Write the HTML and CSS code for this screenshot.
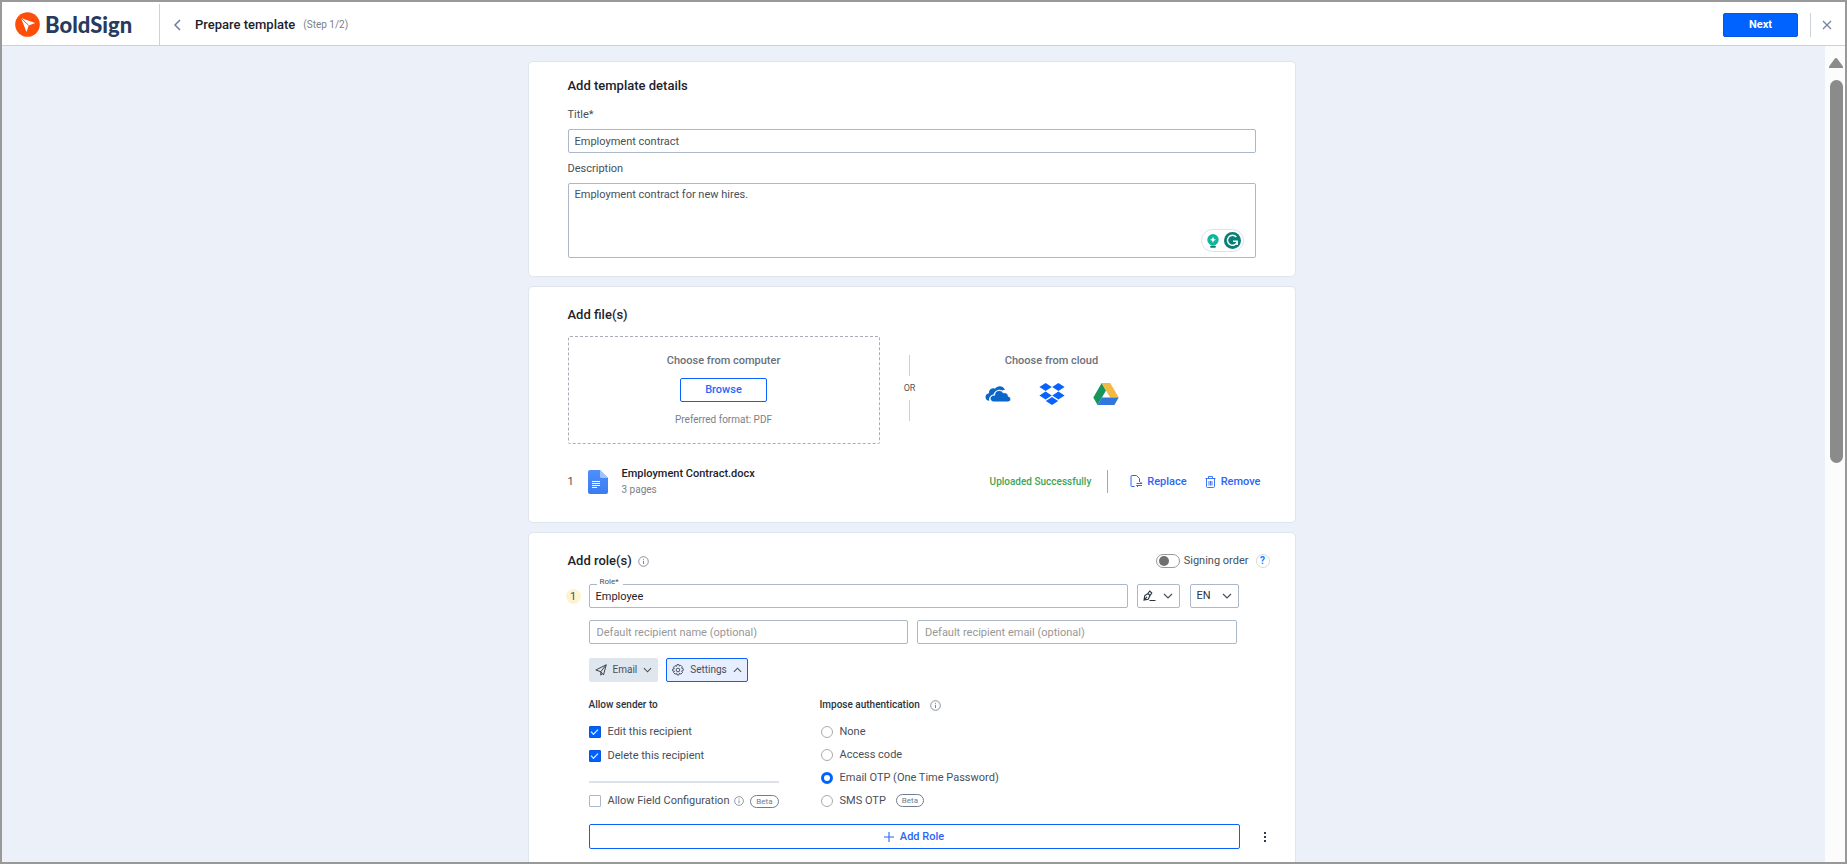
FILE: index.html
```html
<!DOCTYPE html>
<html lang="en">
<head>
<meta charset="utf-8">
<title>Prepare template</title>
<link rel="stylesheet" href="styles.css">
</head>
<body>
<svg class="defs" aria-hidden="true">
  <symbol id="info" viewBox="0 0 11 11"><circle cx="5.500" cy="5.500" r="4.800" fill="none" stroke="currentColor" stroke-width=".9"/><path d="M5.500 4.800v3.200M5.500 2.800v1" stroke="currentColor" stroke-width="1"/></symbol>
  <symbol id="down" viewBox="0 0 10 6"><path d="M1 1l4 4 4-4" fill="none" stroke="currentColor" stroke-width="1.200"/></symbol>
  <symbol id="up" viewBox="0 0 10 6"><path d="M1 5l4-4 4 4" fill="none" stroke="currentColor" stroke-width="1.200"/></symbol>
</svg>
<div class="app">
  <header class="topbar">
    <div class="brand">
      <svg width="25" height="25" viewBox="0 0 25 25"><circle cx="12.500" cy="12.500" r="12.300" fill="#ff4d0a"/><path d="M6 6l14.200 5-6.500 2.400-2.200 6.700z" fill="#fff"/><path d="M6 6l7.700 7.400" stroke="#ff4d0a" stroke-width="1"/></svg>
      <span class="brand-name">BoldSign</span>
    </div>
    <button class="icon-btn back" aria-label="Back"><svg width="8" height="12" viewBox="0 0 8 12"><path d="M7 1L2 6l5 5" fill="none" stroke="#6b7da0" stroke-width="1.500"/></svg></button>
    <h1 class="page-title">Prepare template</h1>
    <span class="step">(Step 1/2)</span>
    <button class="next">Next</button>
    <span class="top-sep"></span>
    <button class="icon-btn close" aria-label="Close"><svg width="10" height="10" viewBox="0 0 10 10"><path d="M1 1l8 8M9 1L1 9" stroke="#75849c" stroke-width="1.300"/></svg></button>
  </header>
  <div class="body">
    <main class="content">
      <section class="card details">
        <h2>Add template details</h2>
        <label class="field-label" for="title">Title*</label>
        <input class="box" id="title" type="text" value="Employment contract">
        <label class="field-label" for="desc">Description</label>
        <div class="area-wrap">
          <textarea class="box area" id="desc">Employment contract for new hires.</textarea>
          <div class="assist">
            <svg width="12" height="14" viewBox="0 0 12 14"><circle cx="6" cy="5.800" r="5.700" fill="#10b59b"/><path d="M3.200 10h5.600l-1 1.500H4.200z" fill="#10b59b"/><path d="M6 2.500c.4 2.200 1 2.800 3.200 3.300C7 6.300 6.400 7 6 9.200 5.600 7 5 6.300 2.800 5.800 5 5.300 5.600 4.700 6 2.500z" fill="#fff"/><path d="M3.200 12h5.600v1q0 .8-.8.800H4q-.8 0-.8-.8z" fill="#087f75"/></svg>
            <svg width="17" height="17" viewBox="0 0 17 17"><circle cx="8.500" cy="8.500" r="8.500" fill="#067f75"/><path d="M12.300 5.100a5 5 0 1 0 .9 4.900M9 9.300h4.200v3.600" fill="none" stroke="#fff" stroke-width="1.500"/></svg>
          </div>
        </div>
      </section>

      <section class="card files">
        <h2>Add file(s)</h2>
        <div class="sources">
          <div class="drop">
            <span class="source-title">Choose from computer</span>
            <button class="browse">Browse</button>
            <span class="hint">Preferred format: PDF</span>
          </div>
          <div class="or"><span class="or-line"></span>OR<span class="or-line"></span></div>
          <div class="cloud">
            <span class="source-title">Choose from cloud</span>
            <div class="cloud-icons">
              <button class="icon-btn" aria-label="OneDrive"><svg width="26" height="22" viewBox="0 0 26 22"><path d="M4.300 17.800C2 17.600.5 16.200.5 14c0-2 1.400-3.500 3.400-3.800-.1-2.800 1.600-4.700 4-4.900.8 0 1.500.1 2.100.4 1.100-1.600 2.700-2.500 4.700-2.500 2.500 0 4.500 1.400 5.300 3.900-1-.1-1.800 0-2.600.4-1.500-.8-3.300-1-5-.3C10.300 8 9 9.500 8.600 11.400 6 11.800 4 14 4.100 16.600z" fill="#0a66c8"/><path d="M8.800 18.900C6.600 18.800 5.200 17.500 5.200 15.600c0-2 1.500-3.400 3.700-3.400h.7c0-2.800 2-4.700 4.500-4.700 2 0 3.400.9 4.200 2.400 2.600-.8 5 .8 5 3.500 1.500.2 2.500 1.200 2.500 2.700 0 1.600-1.200 2.800-2.900 2.800z" fill="#0a66c8" stroke="#fff" stroke-width=".8"/></svg></button>
              <button class="icon-btn" aria-label="Dropbox"><svg width="26" height="22" viewBox="0 0 26 22"><path d="M6.600 0l6.200 4-6.200 4-6.200-4zM19.400 0l6.200 4-6.200 4-6.200-4zM6.600 8.400l6.200 4-6.200 4-6.200-4zM19.400 8.400l6.200 4-6.200 4-6.200-4zM13 14l6.200 4L13 22l-6.200-4z" fill="#0a62fe"/></svg></button>
              <button class="icon-btn" aria-label="Google Drive"><svg width="26" height="22" viewBox="0 0 26 22"><path d="M8.700 0L.3 14.600 4.600 22 13 7.400z" fill="#14965d"/><path d="M8.700 0h8.500l8.500 14.600h-8.600z" fill="#f4b942"/><path d="M4.600 22l4.300-7.400h16.800L21.400 22z" fill="#3076de"/></svg></button>
            </div>
          </div>
        </div>
        <div class="file-row">
          <span class="file-no">1</span>
          <svg width="20" height="24" viewBox="0 0 20 24"><defs><linearGradient id="doc" x1="0" y1="0" x2="0" y2="1"><stop offset="0" stop-color="#4e8ffb"/><stop offset="1" stop-color="#3a7bf0"/></linearGradient></defs><path d="M2 0h10l8 8v14q0 2-2 2H2q-2 0-2-2V2Q0 0 2 0z" fill="url(#doc)"/><path d="M12 0l8 8h-6.500Q12 8 12 6.500z" fill="#a3c4fb"/><path d="M4 11.500h8M4 13.500h8M4 15.500h8M4 17.500h5" stroke="#fff" stroke-width="1.200"/></svg>
          <div class="file-text"><span class="file-name">Employment Contract.docx</span><span class="file-pages">3 pages</span></div>
          <span class="status">Uploaded Successfully</span>
          <span class="file-sep"></span>
          <button class="link-btn"><svg width="13" height="13" viewBox="0 0 13 13"><path d="M4.500 11.500H2q-1 0-1-1v-9q0-1 1-1h4.500l3 3v3.500M6.500 8.500H12l-1.500-1.500M12 10.500H6.500L8 12" fill="none" stroke="#2b66f6" stroke-width="1"/></svg>Replace</button>
          <button class="link-btn remove"><svg width="11" height="12" viewBox="0 0 11 12"><path d="M.5 2.500h10M3.500 2.500v-2h4v2M1.500 2.500v8q0 1 1 1h6q1 0 1-1v-8M4 5v4.500M5.500 5v4.500M7 5v4.500" fill="none" stroke="#2b66f6" stroke-width=".9"/></svg>Remove</button>
        </div>
      </section>

      <section class="card roles">
        <div class="roles-head">
          <h2>Add role(s)</h2>
          <svg class="info" width="11" height="11"><use href="#info"/></svg>
          <label class="order"><input class="toggle" type="checkbox" role="switch">Signing order</label>
          <button class="help" aria-label="Help">?</button>
        </div>
        <div class="role-row">
          <span class="badge-no">1</span>
          <div class="role-field">
            <label class="float-label" for="role">Role*</label>
            <input class="box role-input" id="role" type="text" value="Employee">
          </div>
          <button class="sign-btn" aria-label="Signer type"><svg width="13" height="12" viewBox="0 0 13 12"><path d="M1 10l.8-4.500L5 3.500l2 2-1.800 3.700zM1 10l3-3.200M5 3.300L6.800 1l2 2-1.700 2.300M6.500 10.500h6" fill="none" stroke="#2c3440" stroke-width="1.100"/></svg><svg width="10" height="6"><use href="#down"/></svg></button>
          <div class="lang"><select aria-label="Language"><option>EN</option></select><svg width="10" height="6"><use href="#down"/></svg></div>
        </div>
        <div class="role-body">
          <div class="recipients">
            <input class="box" type="text" aria-label="Default recipient name" placeholder="Default recipient name (optional)">
            <input class="box" type="text" aria-label="Default recipient email" placeholder="Default recipient email (optional)">
          </div>
          <div class="chips">
            <button class="chip"><svg width="12" height="12" viewBox="0 0 12 12"><path d="M.8 6L11.200.8 8.500 11 5.800 7.700zM11.200.8L5.800 7.700v3.500l1.400-1.800" fill="none" stroke="#3d4652" stroke-width="1" stroke-linejoin="round"/></svg>Email<svg width="9" height="6"><use href="#down"/></svg></button>
            <button class="chip on"><svg width="12" height="12" viewBox="0 0 12 12"><path d="M5 .6h2l.4 1.500 1.400-.8 1.500 1.500-.8 1.300 1.700.5v2l-1.600.5.9 1.500-1.600 1.500-1.500-.9-.4 1.700H5l-.4-1.600-1.500.9-1.500-1.600.9-1.400L.7 7V5l1.700-.4-.9-1.500L3 1.600l1.500.8z" fill="none" stroke="#3d4652" stroke-width=".9"/><circle cx="6" cy="6" r="1.800" fill="none" stroke="#3d4652" stroke-width=".9"/></svg>Settings<svg width="9" height="6"><use href="#up"/></svg></button>
          </div>
          <div class="settings">
            <div class="allow">
              <h3>Allow sender to</h3>
              <label class="opt"><input class="check" type="checkbox" checked>Edit this recipient</label>
              <label class="opt"><input class="check" type="checkbox" checked>Delete this recipient</label>
              <hr>
              <div class="config"><label class="opt"><input class="check" type="checkbox">Allow Field Configuration</label><svg class="info" width="10" height="10" viewBox="0 0 11 11"><use href="#info" width="11" height="11"/></svg><span class="beta">Beta</span></div>
            </div>
            <div class="auth">
              <h3>Impose authentication<svg class="info" width="11" height="11"><use href="#info"/></svg></h3>
              <label class="opt"><input class="radio" type="radio" name="auth">None</label>
              <label class="opt"><input class="radio" type="radio" name="auth">Access code</label>
              <label class="opt"><input class="radio" type="radio" name="auth" checked>Email OTP (One Time Password)</label>
              <label class="opt"><input class="radio" type="radio" name="auth">SMS OTP<span class="beta">Beta</span></label>
            </div>
          </div>
        </div>
        <div class="add-row">
          <button class="add"><svg width="10" height="10" viewBox="0 0 10 10"><path d="M5 0v10M0 5h10" stroke="#2b66f6" stroke-width="1.100"/></svg>Add Role</button>
          <button class="icon-btn" aria-label="More"><svg width="4" height="12" viewBox="0 0 4 12"><path d="M1 1h2v2H1zM1 5h2v2H1zM1 9h2v2H1z" fill="#2f3a4d"/></svg></button>
        </div>
      </section>
    </main>
    <div class="scroll" aria-hidden="true">
      <svg width="14" height="10" viewBox="0 0 14 10"><path d="M5.500 1q1.500-1.800 3 0L14 8.500V10H0V8.500z" fill="#8b8b8b"/></svg>
      <div class="track"><div class="thumb"></div></div>
    </div>
  </div>
</div>
</body>
</html>
```
FILE: styles.css
```css
* { box-sizing: border-box; }
body { margin: 0; font-family: Roboto, "Liberation Sans", sans-serif; font-size: 11px; line-height: 16px; color: #474f5a; }
button, input, textarea, select { font: inherit; color: inherit; margin: 0; }
button { cursor: pointer; padding: 0; background: none; border: 0; }
svg { display: block; flex: none; }
h1, h2, h3 { margin: 0; font-weight: 500; }
.defs { display: none; }
.app { height: 100vh; border: 2px solid #999; overflow: hidden; display: flex; flex-direction: column; }

.topbar { flex: none; height: 44px; display: flex; align-items: center; background: #fff; border-bottom: 1px solid #c8d2e0; padding: 2px 13px 0 0; }
.brand { align-self: stretch; width: 158px; display: flex; align-items: center; gap: 5px; padding-left: 13px; border-right: 1px solid #c8d2e0; }
.brand-name { font-family: Lato, sans-serif; font-weight: 900; font-size: 22px; line-height: 24px; color: #283a5e; }
.icon-btn { display: flex; align-items: center; justify-content: center; }
.back { margin-left: 13px; }
.page-title { margin-left: 14px; font-size: 13px; color: #1d232c; }
.step { margin-left: 8px; font-size: 10px; color: #7a7f87; }
.next { margin-left: auto; width: 75px; height: 24px; border: 1px solid #0a55d8; border-radius: 2px; background: #0062ff; color: #fff; font-weight: 700; }
.top-sep { width: 1px; height: 24px; margin: 0 11px 0 12px; background: #ccd0d8; }

.body { flex: 1; min-height: 0; display: flex; background: #ecf0f9; }
.content { flex: 1; min-width: 0; overflow: hidden; padding: 15px 20px 15px 16px; display: flex; flex-direction: column; align-items: center; gap: 9px; }
.scroll { width: 20px; background: #fcfcfc; display: flex; flex-direction: column; align-items: center; padding: 12px 2px 0 4px; gap: 12px; }
.track { flex: 1; width: 13px; }
.thumb { height: 49%; border-radius: 7px; background: #8b8b8b; }

.card { flex: none; width: 100%; max-width: 768px; background: #fff; border: 1px solid #dfe5ee; border-radius: 5px; padding: 16px 39px 18px; }
h2 { font-size: 13px; line-height: 16px; color: #1d232c; }
.box { display: block; width: 100%; height: 24px; border: 1px solid #abb8c9; border-radius: 2px; background: #fff; padding: 0 6px; outline: 0; }
.box::placeholder { color: #979797; opacity: 1; }
.field-label { display: block; padding: 8px 0 6px; }
.details h2 { margin-bottom: 5px; }
.area-wrap { position: relative; }
.area { height: 75px; padding: 3px 6px; resize: none; }
.assist { position: absolute; right: 12px; bottom: 6px; display: flex; align-items: center; gap: 5px; padding: 2px 2px 2px 5px; border: 1px solid #dfe0ea; border-radius: 12px; background: #fff; }

.files { padding-top: 20px; padding-bottom: 25px; }
.sources { display: flex; margin-top: 13px; }
.drop { width: 312px; height: 108px; border: 1px dashed #a9adb8; border-radius: 2px; display: flex; flex-direction: column; align-items: center; padding-top: 16px; }
.source-title { font-weight: 500; color: #6a717b; }
.browse { width: 87px; height: 24px; margin: 9px 0 10px; border: 1px solid #0a62fe; border-radius: 2px; color: #2b66f6; font-weight: 500; }
.hint { font-size: 10px; color: #7a7f87; }
.or { width: 60px; display: flex; flex-direction: column; align-items: center; justify-content: center; gap: 4px; padding-bottom: 4px; font-size: 9px; color: #555; }
.or-line { width: 1px; height: 21px; background: #c6cfde; }
.cloud { width: 224px; display: flex; flex-direction: column; align-items: center; padding-top: 17px; }
.cloud-icons { display: flex; gap: 28px; margin-top: 14px; }
.file-row { display: flex; align-items: center; margin: 22px -5px 0 0; }
.file-no { width: 20px; }
.file-text { display: flex; flex-direction: column; margin-left: 14px; }
.file-name { font-weight: 500; color: #1d232c; }
.file-pages { font-size: 10px; line-height: 15px; color: #7a7f87; }
.status { margin-left: auto; font-size: 10px; font-weight: 500; color: #43a555; }
.file-sep { width: 1px; height: 23px; margin: 0 22px 0 16px; background: #a3a8b0; }
.link-btn { display: flex; align-items: center; gap: 4px; font-weight: 500; color: #2b66f6; }
.remove { margin-left: 18px; gap: 5px; }

.roles { padding: 19px 25px 30px 37px; }
.roles-head { display: flex; align-items: center; padding-left: 2px; height: 18px; }
.info { color: #7b8494; }
.roles-head .info { margin-left: 6px; }
.order { margin-left: auto; display: flex; align-items: center; gap: 4px; }
.toggle { appearance: none; width: 24px; height: 14px; border: 1px solid #999; border-radius: 7px; padding: 1px 2px; background: #fff; }
.toggle::before { content: ""; display: block; width: 10px; height: 10px; border-radius: 50%; background: #707070; }
.help { width: 14px; height: 14px; margin-left: 7px; border: 1px solid #d5dae2; border-radius: 50%; color: #0a7cff; font-weight: 700; font-size: 10px; line-height: 12px; }
.role-row { display: flex; align-items: center; margin: 14px 31px 0 0; }
.badge-no { width: 15px; height: 15px; border-radius: 50%; background: #fdf3d0; text-align: center; line-height: 15px; margin-right: 8px; }
.role-field { position: relative; flex: 1; }
.role-input { color: #1d232c; }
.float-label { position: absolute; left: 8px; top: -8px; padding: 0 4px 0 3px; background: #fff; font-size: 8px; line-height: 12px; }
.sign-btn { width: 43px; height: 24px; margin: 0 10px 0 9px; border: 1px solid #abb8c9; border-radius: 2px; display: flex; align-items: center; justify-content: center; gap: 7px; }
.lang { position: relative; width: 49px; }
.lang select { appearance: none; width: 100%; height: 24px; border: 1px solid #abb8c9; border-radius: 2px; background: #fff; padding: 0 6px; color: #2c3440; }
.lang svg { position: absolute; right: 7px; top: 9px; pointer-events: none; }
.role-body { padding: 0 33px 0 23px; }
.recipients { display: grid; grid-template-columns: 1fr 1fr; gap: 9px; margin-top: 12px; }
.recipients .box { padding: 0 7px; }
.chips { display: flex; gap: 8px; margin-top: 14px; }
.chip { height: 24px; display: flex; align-items: center; gap: 6px; padding: 0 5px; border: 1px solid #e0e6ee; border-radius: 2px; background: #e0e6ee; }
.chip.on { border-color: #0a62fe; background: #e6eeff; }
.chip { font-size: 10px; }
.settings { display: flex; gap: 41px; margin-top: 15px; }
.allow { width: 190px; }
h3 { display: flex; align-items: center; gap: 10px; font-size: 10px; line-height: 16px; color: #2c3440; }
.opt { display: flex; align-items: center; height: 24px; gap: 7px; }
h3 + .opt { margin-top: 7px; }
.check { appearance: none; flex: none; width: 12px; height: 12px; border: 1px solid #abb8c9; border-radius: 1px; background: #fff; }
.check:checked { border-color: #0a55d8; background: #0062ff; }
.check:checked::before { content: ""; display: block; width: 6px; height: 3px; margin: 2px auto 0; border: solid #fff; border-width: 0 0 1px 1px; transform: rotate(-45deg); }
.radio { appearance: none; flex: none; width: 12px; height: 12px; border: 1px solid #aaa; border-radius: 50%; background: #fff; }
.radio:checked { border: 3px solid #0062ff; }
hr { border: 0; height: 2px; margin: 13px 0 6px; background: #dde2e9; }
.config { display: flex; align-items: center; gap: 5px; }
.beta { margin-left: auto; border: 1px solid #6f7d94; border-radius: 7px; padding: 0 5px; font-size: 8px; line-height: 11px; color: #6f7d94; }
.auth { padding-left: 1px; }
.auth h3 { margin-left: -1px; }
.auth .opt { height: 23px; }
.auth .beta { margin-left: 3px; }
.add-row { display: flex; align-items: center; gap: 23px; margin-top: 11px; padding: 0 3px 0 23px; }
.add { flex: 1; height: 25px; display: flex; align-items: center; justify-content: center; gap: 6px; border: 1px solid #0a62fe; border-radius: 2px; color: #2b66f6; font-weight: 500; }
```
